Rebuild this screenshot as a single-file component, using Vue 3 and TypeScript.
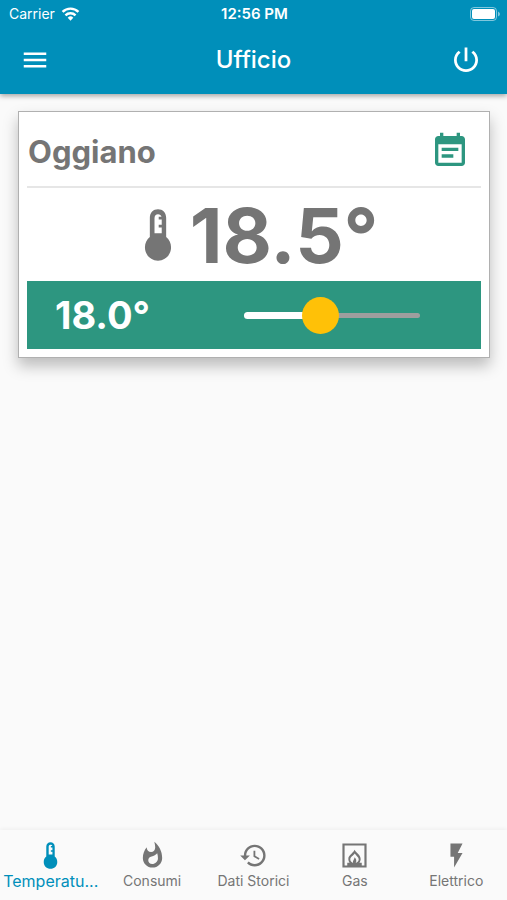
<script setup lang="ts">
import { computed, ref } from 'vue'

interface Shape {
  d: string
  rule?: 'evenodd' | 'nonzero'
}

interface Tab {
  id: string
  label: string
  icon: Shape
}

const thermometer: Shape = {
  d: 'M12 1C10 1 8.5 2.5 8.5 4.6V12.9C7.2 14 6.4 15.5 6.4 17.3C6.4 20.5 8.9 23 12 23S17.6 20.5 17.6 17.3C17.6 15.5 16.8 14 15.5 12.9V4.6C15.5 2.5 14 1 12 1ZM12 3.1C12.8 3.1 13.3 3.5 13.5 4.2H12.3V5.4H13.6V7.6H12.3V8.8H13.6V11.2H10.5V4.8C10.5 3.8 11.1 3.1 12 3.1Z',
  rule: 'evenodd',
}

const tabs: Tab[] = [
  { id: 'temperature', label: 'Temperatu...', icon: thermometer },
  {
    id: 'consumi',
    label: 'Consumi',
    icon: {
      d: 'M13.5.67s.74 2.65.74 4.8c0 2.06-1.35 3.73-3.41 3.73-2.07 0-3.63-1.67-3.63-3.73l.03-.36C5.21 7.51 4 10.62 4 14c0 4.42 3.58 8 8 8s8-3.58 8-8C20 8.61 17.41 3.8 13.5.67zM11.71 19c-1.78 0-3.22-1.4-3.22-3.14 0-1.62 1.05-2.76 2.81-3.12 1.77-.36 3.6-1.21 4.62-2.58.39 1.29.59 2.65.59 4.04 0 2.65-2.15 4.8-4.8 4.8z',
    },
  },
  {
    id: 'storici',
    label: 'Dati Storici',
    icon: {
      d: 'M13 3a9 9 0 0 0-9 9H1l3.89 3.89.07.14L9 12H6c0-3.87 3.13-7 7-7s7 3.13 7 7-3.13 7-7 7c-1.93 0-3.68-.79-4.94-2.06l-1.42 1.42A8.954 8.954 0 0 0 13 21a9 9 0 0 0 0-18zm-1 5v5l4.28 2.54.72-1.21-3.5-2.08V8H12z',
    },
  },
  {
    id: 'gas',
    label: 'Gas',
    icon: {
      d: 'M2 2H22V22H2ZM3.8 3.8V20.2H6V18H8C7.3 17.1 6.9 16 6.9 14.8C6.9 11.6 10.4 10.5 12.1 7.2C13.4 9.8 17.1 11.5 17.1 14.8C17.1 16 16.7 17.1 16 18H18V20.2H20.2V3.8ZM12.2 10.4C11 12.2 8.5 13.2 8.5 15.2C8.5 16.6 9.4 17.8 10.9 18.2C10.2 16.2 12 15.4 12 13.4C13.5 14.6 14 16.4 13 18.2C14.6 17.8 15.5 16.6 15.5 15.2C15.5 13.2 13.3 12.4 12.2 10.4Z',
      rule: 'evenodd',
    },
  },
  { id: 'elettrico', label: 'Elettrico', icon: { d: 'M7 2v11h3v9l7-12h-4l4-8z' } },
]

const activeTab = ref<string>('temperature')
const powered = ref<boolean>(true)
const current = ref<number>(18.5)
const min = 5
const max = 35
const target = ref<number>(18)

const targetLabel = computed<string>(() => `${target.value.toFixed(1)}°`)
const fill = computed<string>(() => `${((target.value - min) / (max - min)) * 100}%`)
</script>

<template>
  <div class="screen">
    <header class="top">
      <div class="status">
        <div class="carrier">
          <span>Carrier</span>
          <svg class="wifi" viewBox="0 0 20 15" aria-hidden="true">
            <path d="M10 14.6 13 11.4A4.3 4.3 0 0 0 7 11.4Z" />
            <path class="arc" d="M4.6 8.9A7.6 7.6 0 0 1 15.4 8.9M1.5 5.3A12 12 0 0 1 18.5 5.3" />
          </svg>
        </div>
        <span class="clock">12:56 PM</span>
        <svg class="battery" viewBox="0 0 30 14" aria-hidden="true">
          <rect class="shell" x="0.5" y="0.5" width="26" height="13" rx="3.5" />
          <rect x="2" y="2" width="23" height="10" rx="2" />
          <path class="tip" d="M28 4.5Q30 5.5 30 7T28 9.5Z" />
        </svg>
      </div>
      <div class="toolbar">
        <button class="icon-button" type="button" aria-label="Menu">
          <svg viewBox="0 0 24 24"><path d="M3 18h18v-2H3v2zm0-5h18v-2H3v2zm0-7v2h18V6H3z" /></svg>
        </button>
        <h1>Ufficio</h1>
        <button class="icon-button power" type="button" aria-label="Power" :aria-pressed="powered" @click="powered = !powered">
          <svg viewBox="0 0 24 24">
            <path d="M13.1 2h-2.2v11h2.2V2zm4.73 2.6-1.5 1.5C18.1 7.3 19.4 9.4 19.4 12c0 4.1-3.3 7.4-7.4 7.4S4.6 16.1 4.6 12c0-2.6 1.3-4.7 3.07-5.9L6.17 4.6C3.9 6.3 2.4 8.9 2.4 12c0 5.3 4.3 9.6 9.6 9.6s9.6-4.3 9.6-9.6c0-3.1-1.5-5.7-3.77-7.4z" />
          </svg>
        </button>
      </div>
    </header>

    <main>
      <section class="card">
        <div class="card-head">
          <h2>Oggiano</h2>
          <button class="calendar" type="button" aria-label="Calendar">
            <svg viewBox="0 0 24 24">
              <path d="M14 14H7v2h7v-2zm5-11h-1V1h-2v2H8V1H6v2H5c-1.11 0-1.99.9-1.99 2L3 19c0 1.1.89 2 2 2h14c1.1 0 2-.9 2-2V5c0-1.1-.9-2-2-2zm0 16H5V8h14v11zm-2-9H7v2h10v-2z" />
            </svg>
          </button>
        </div>
        <div class="reading">
          <svg viewBox="0 0 24 24" aria-hidden="true">
            <path :d="thermometer.d" :fill-rule="thermometer.rule" />
          </svg>
          <span>{{ current.toFixed(1) }}°</span>
        </div>
        <div class="setpoint">
          <label for="target">{{ targetLabel }}</label>
          <div class="slider">
            <div class="track"><div class="track-fill" :style="{ width: fill }"></div></div>
            <input id="target" v-model.number="target" type="range" :min="min" :max="max" step="0.5" />
          </div>
        </div>
      </section>
    </main>

    <nav class="tabs">
      <button
        v-for="tab in tabs"
        :key="tab.id"
        type="button"
        :class="['tab', { active: tab.id === activeTab }]"
        @click="activeTab = tab.id"
      >
        <svg viewBox="0 0 24 24" aria-hidden="true"><path :d="tab.icon.d" :fill-rule="tab.icon.rule" /></svg>
        <span>{{ tab.label }}</span>
      </button>
    </nav>
  </div>
</template>

<style>
body {
  background: #fafafa;
}
</style>

<style scoped>
.screen {
  display: flex;
  flex-direction: column;
  min-height: 100vh;
  background: #fafafa;
  color: #757575;
  font-family: Inter, Roboto, 'Liberation Sans', sans-serif;
}

button {
  padding: 0;
  border: 0;
  background: none;
  color: inherit;
  font: inherit;
  cursor: pointer;
}

svg {
  display: block;
  fill: currentColor;
}

h1,
h2 {
  margin: 0;
}

.top {
  background: #008fba;
  color: #fff;
  box-shadow: 0 2px 5px rgba(0, 0, 0, 0.35);
}

.status {
  display: grid;
  grid-template-columns: 1fr auto 1fr;
  align-items: center;
  height: 27px;
  padding: 0 7px 0 9px;
  font-size: 14px;
}

.carrier {
  display: flex;
  align-items: center;
  gap: 6px;
}

.wifi {
  width: 19px;
  height: 14px;
}

.arc {
  fill: none;
  stroke: currentColor;
  stroke-width: 2.6;
}

.clock {
  font-size: 15px;
  font-weight: 600;
}

.battery {
  justify-self: end;
  width: 30px;
  height: 14px;
}

.shell {
  fill: none;
  stroke: currentColor;
  opacity: 0.5;
}

.tip {
  opacity: 0.5;
}

.toolbar {
  display: grid;
  grid-template-columns: 1fr auto 1fr;
  align-items: center;
  height: 65px;
  padding: 0 20px 2px;
}

.icon-button {
  justify-self: start;
}

.icon-button svg {
  width: 30px;
  height: 30px;
}

.power {
  justify-self: end;
  margin-right: 6px;
}

h1 {
  font-size: 24px;
  font-weight: 500;
}

main {
  flex: 1;
  padding: 17px 17px 17px 18px;
}

.card {
  padding: 8px;
  border: 1px solid #b0b0b0;
  background: #fff;
  box-shadow: 0 8px 14px rgba(0, 0, 0, 0.25);
}

.card-head {
  display: flex;
  align-items: center;
  justify-content: space-between;
  height: 62px;
  padding: 0 11px 4px 1px;
  border-bottom: 2px solid #e6e6e6;
}

h2 {
  font-size: 31px;
  font-weight: 700;
}

.calendar {
  color: #2d9680;
}

.calendar svg {
  width: 40px;
  height: 40px;
}

.reading {
  display: flex;
  align-items: center;
  justify-content: center;
  gap: 4px;
  height: 93px;
  font-size: 76px;
  font-weight: 700;
  line-height: 92px;
}

.reading svg {
  width: 56px;
  height: 56px;
}

.setpoint {
  display: flex;
  align-items: center;
  justify-content: space-between;
  height: 68px;
  padding: 0 61px 0 28px;
  background: #2d9680;
  color: #fff;
}

.setpoint label {
  font-size: 38px;
  font-weight: 700;
}

.slider {
  display: grid;
  align-items: center;
  width: 50%;
  max-width: 176px;
}

.slider > * {
  grid-area: 1 / 1;
}

.track {
  height: 5px;
  border-radius: 3px;
  background: #9e9e9e;
}

.track-fill {
  height: 7px;
  margin-top: -1px;
  border-radius: 4px;
  background: #fff;
}

input {
  width: calc(100% + 36px);
  height: 37px;
  margin: 0 -18px;
  appearance: none;
  background: none;
  cursor: pointer;
}

input::-webkit-slider-thumb {
  width: 37px;
  height: 37px;
  border: 0;
  border-radius: 50%;
  appearance: none;
  background: #ffc107;
}

.tabs {
  display: grid;
  grid-template-columns: repeat(5, 1fr);
  height: 70px;
  background: #fafafa;
  box-shadow: 0 -1px 4px rgba(0, 0, 0, 0.05);
}

.tab {
  display: flex;
  flex-direction: column;
  align-items: center;
  justify-content: center;
  min-width: 0;
  padding-top: 2px;
  font-size: 14px;
  line-height: 22px;
}

.tab svg {
  width: 29px;
  height: 29px;
}

.tab span {
  white-space: nowrap;
}

.tab.active {
  color: #008fba;
  font-size: 16px;
}
</style>
